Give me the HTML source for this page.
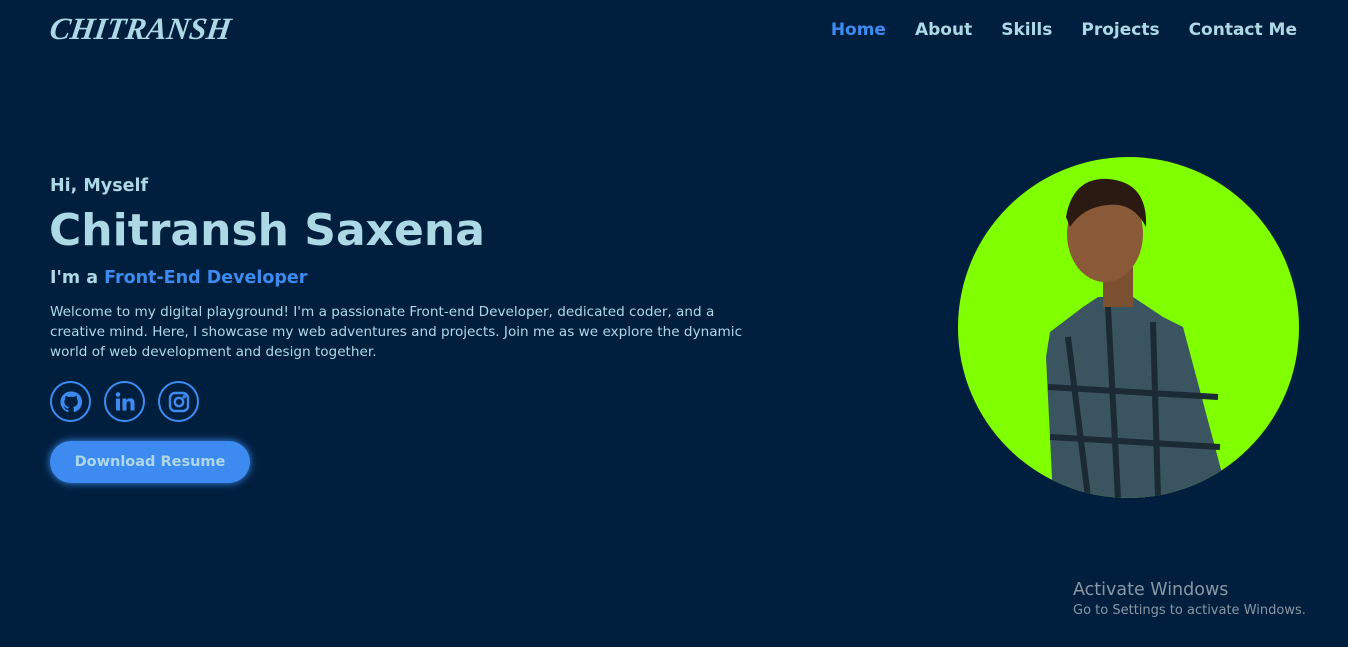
<!DOCTYPE html>
<html><head><meta charset="utf-8"><style>
body{margin:0;width:1348px;height:647px;background:#001f3f;font-family:"DejaVu Sans","Liberation Sans",sans-serif;color:#add8e6;position:relative;overflow:hidden}
.logo{position:absolute;left:50px;top:11px;font:italic bold 31px "Liberation Serif",serif;color:#add8e6;transform:skewX(-8deg)}
nav{position:absolute;top:20px;right:51px;font-weight:bold;font-size:17px}
nav span{margin-left:29px}
.h1{position:absolute;left:50px;top:176px;font-weight:bold;font-size:17.5px}
.h2{position:absolute;left:49px;top:205px;font-weight:bold;font-size:44px}
.h3{position:absolute;left:50px;top:268px;font-weight:bold;font-size:17.5px}
.b{color:#3d8bf0}
p{position:absolute;left:50px;top:302px;margin:0;width:720px;font-size:13.6px;line-height:20px}
.ic{position:absolute;top:381px;width:37px;height:37px;border:2px solid #3d8bf0;border-radius:50%;display:flex;align-items:center;justify-content:center}
.btn{position:absolute;left:50px;top:441px;width:200px;height:42px;border-radius:21px;background:#3d8bf0;box-shadow:0 0 8px #3d8bf0;color:#add8e6;font-weight:bold;font-size:14.5px;line-height:42px;text-align:center}
.win{position:absolute;left:1073px;top:580px;color:#8a96a3;font-size:17.5px}
.win small{display:block;font-size:13px;margin-top:3px}
</style></head><body>
<div class="logo">CHITRANSH</div>
<nav><span class="b">Home</span><span>About</span><span>Skills</span><span>Projects</span><span>Contact Me</span></nav>
<div class="h1">Hi, Myself</div>
<div class="h2">Chitransh Saxena</div>
<div class="h3">I'm a <span class="b">Front-End Developer</span></div>
<p>Welcome to my digital playground! I'm a passionate Front-end Developer, dedicated coder, and a creative mind. Here, I showcase my web adventures and projects. Join me as we explore the dynamic world of web development and design together.</p>
<div class="ic" style="left:50px"><svg width="24" height="24" viewBox="0 0 24 24"><path fill="#3d8bf0" d="M12 1.5a10.5 10.5 0 0 0-3.3 20.5c.5.1.7-.2.7-.5v-1.9c-2.9.6-3.5-1.3-3.5-1.3-.5-1.2-1.2-1.5-1.2-1.5-1-.6.1-.6.1-.6 1 .1 1.6 1.1 1.6 1.1.9 1.6 2.5 1.1 3.1.9.1-.7.4-1.1.7-1.4-2.300-.3-4.8-1.2-4.8-5.2 0-1.1.4-2.1 1.1-2.8-.1-.3-.5-1.3.1-2.8 0 0 .9-.3 2.9 1.1a10 10 0 0 1 5.2 0c2-1.4 2.9-1.1 2.9-1.1.6 1.5.2 2.5.1 2.8.7.7 1.1 1.7 1.1 2.8 0 4-2.5 4.9-4.8 5.2.4.3.7 1 .7 1.9v2.9c0 .3.2.6.7.5A10.5 10.5 0 0 0 12 1.5z"/></svg></div>
<div class="ic" style="left:104px"><svg width="24" height="24" viewBox="0 0 24 24"><rect x="3" y="8.5" width="4" height="12" fill="#3d8bf0"/><circle cx="5" cy="4.5" r="2.3" fill="#3d8bf0"/><path fill="#3d8bf0" d="M9.5 8.5h3.8v1.7c.6-1 1.9-2 3.9-2 3.6 0 4.3 2.3 4.3 5.3v7h-4v-6.2c0-1.5-.1-3.1-1.9-3.1s-2.1 1.4-2.1 3v6.3h-4z"/></svg></div>
<div class="ic" style="left:158px"><svg width="24" height="24" viewBox="0 0 24 24" fill="none" stroke="#3d8bf0" stroke-width="2.4"><rect x="3" y="3" width="18" height="18" rx="5"/><circle cx="12" cy="12" r="4.2"/><circle cx="17.3" cy="6.7" r=".6" fill="#3d8bf0"/></svg></div>
<div class="btn">Download Resume</div>
<svg style="position:absolute;left:958px;top:157px" width="341" height="341" viewBox="0 0 341 341">
<defs><clipPath id="c"><circle cx="170.5" cy="170.5" r="170.5"/></clipPath></defs>
<circle cx="170.5" cy="170.5" r="170.5" fill="#80ff00"/>
<g clip-path="url(#c)">
<path d="M92 175 L125 150 L140 140 L175 140 L205 160 L225 170 L265 320 L262 341 L95 341 L88 200 Z" fill="#3a5560"/>
<path d="M110 180 L130 340 M150 150 L160 341 M195 165 L200 341 M90 230 L260 240 M92 280 L262 290" stroke="#1b2a33" stroke-width="6"/>
<rect x="145" y="110" width="30" height="40" fill="#7a5030"/>
<ellipse cx="147" cy="77" rx="38" ry="48" fill="#8a5a38"/>
<path d="M108 60 Q115 20 150 22 Q190 25 188 70 Q175 45 150 48 Q125 50 112 70 Z" fill="#2a1a12"/>
</g></svg>
<div class="win">Activate Windows<small>Go to Settings to activate Windows.</small></div>
</body></html>
